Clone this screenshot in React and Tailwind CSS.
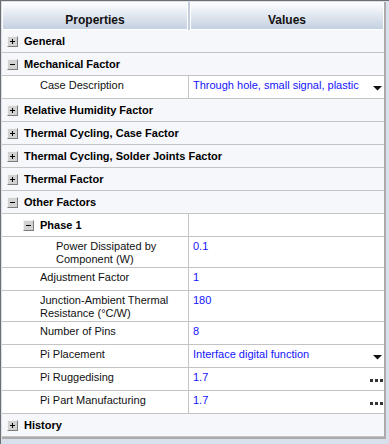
import React from "react";

const FONT = { fontFamily: '"Liberation Sans", Arial, sans-serif' };

function Box({ open }) {
  return (
    <span className="relative inline-flex shrink-0 w-[11px] h-[11px] items-center justify-center bg-[#d2d2d2] border border-t-[#f2f2f2] border-l-[#f2f2f2] border-r-[#7c7c7c] border-b-[#7c7c7c]">
      <span className="absolute w-[5px] h-[1px] bg-black" />
      {!open && <span className="absolute w-[1px] h-[5px] bg-black" />}
    </span>
  );
}

function Category({ label, open }) {
  return (
    <div className="flex items-center h-[23px] border-b border-[#c4c4c4] bg-[#f6f7fb] pl-[5px] gap-[6px]">
      <Box open={open} />
      <span className="text-[11px] font-bold text-black leading-[14px]">{label}</span>
    </div>
  );
}

function Arrow() {
  return (
    <svg className="absolute right-[1px] top-[10px]" width="10" height="5" viewBox="0 0 10 5">
      <polygon points="0,0 9,0 4.5,4.5" fill="#111" />
    </svg>
  );
}

function Dots() {
  return (
    <span className="absolute right-[1px] top-[11px] flex gap-[2px]">
      <span className="w-[3px] h-[3px] bg-[#333]" />
      <span className="w-[3px] h-[3px] bg-[#333]" />
      <span className="w-[3px] h-[3px] bg-[#333]" />
    </span>
  );
}

function Prop({ label, value, indent = 38, tall, extra }) {
  return (
    <div className={`flex border-b border-[#c4c4c4] bg-white ${tall ? "h-[31px]" : "h-[23px]"}`}>
      <div
        className="w-[187px] shrink-0 border-r border-[#c4c4c4] pt-[3px] pr-2 text-[11px] leading-[13px] text-[#111]"
        style={{ paddingLeft: indent }}
      >
        {label}
      </div>
      <div className="relative flex-1 pl-[4px] pt-[3px] text-[11px] leading-[13px] text-[#1414ff]">
        {value}
        {extra === "arrow" && <Arrow />}
        {extra === "dots" && <Dots />}
      </div>
    </div>
  );
}

export default function App() {
  return (
    <div
      className="w-[389px] h-[444px] border-t border-l border-[#6e6e6e] bg-[#d8e0eb] pl-[1px] pt-[1px]"
      style={FONT}
    >
      <div className="w-[384px] border-r-2 border-b-2 border-[#ababab]">
        {/* header */}
        <div className="flex h-[28px] bg-[#c3cddb]">
          <div className="w-[186px] shrink-0 border border-white bg-gradient-to-b from-[#fcfdfe] to-[#c4d0e1] flex justify-center pt-[10px]">
            <span className="text-[12px] font-bold leading-[14px] text-[#111]">Properties</span>
          </div>
          <div className="w-[2px] shrink-0" />
          <div className="flex-1 border border-white bg-gradient-to-b from-[#fcfdfe] to-[#c4d0e1] flex justify-center pt-[10px]">
            <span className="text-[12px] font-bold leading-[14px] text-[#111]">Values</span>
          </div>
        </div>
        {/* rows */}
        <Category label="General" />
        <Category label="Mechanical Factor" open />
        <Prop label="Case Description" value="Through hole, small signal, plastic" extra="arrow" />
        <Category label="Relative Humidity Factor" />
        <Category label="Thermal Cycling, Case Factor" />
        <Category label="Thermal Cycling, Solder Joints Factor" />
        <Category label="Thermal Factor" />
        <Category label="Other Factors" open />
        <div className="flex h-[23px] border-b border-[#c4c4c4] bg-white">
          <div className="w-[187px] shrink-0 border-r border-[#c4c4c4] flex items-center pl-[21px] gap-[6px]">
            <Box open />
            <span className="text-[11px] font-bold leading-[14px] text-black">Phase 1</span>
          </div>
          <div className="flex-1" />
        </div>
        <Prop label={<>Power Dissipated by<br />Component (W)</>} value="0.1" indent={54} tall />
        <Prop label="Adjustment Factor" value="1" />
        <Prop label={<>Junction-Ambient Thermal<br />Resistance (°C/W)</>} value="180" tall />
        <Prop label="Number of Pins" value="8" />
        <Prop label="Pi Placement" value="Interface digital function" extra="arrow" />
        <Prop label="Pi Ruggedising" value="1.7" extra="dots" />
        <Prop label="Pi Part Manufacturing" value="1.7" extra="dots" />
        <Category label="History" />
      </div>
    </div>
  );
}
